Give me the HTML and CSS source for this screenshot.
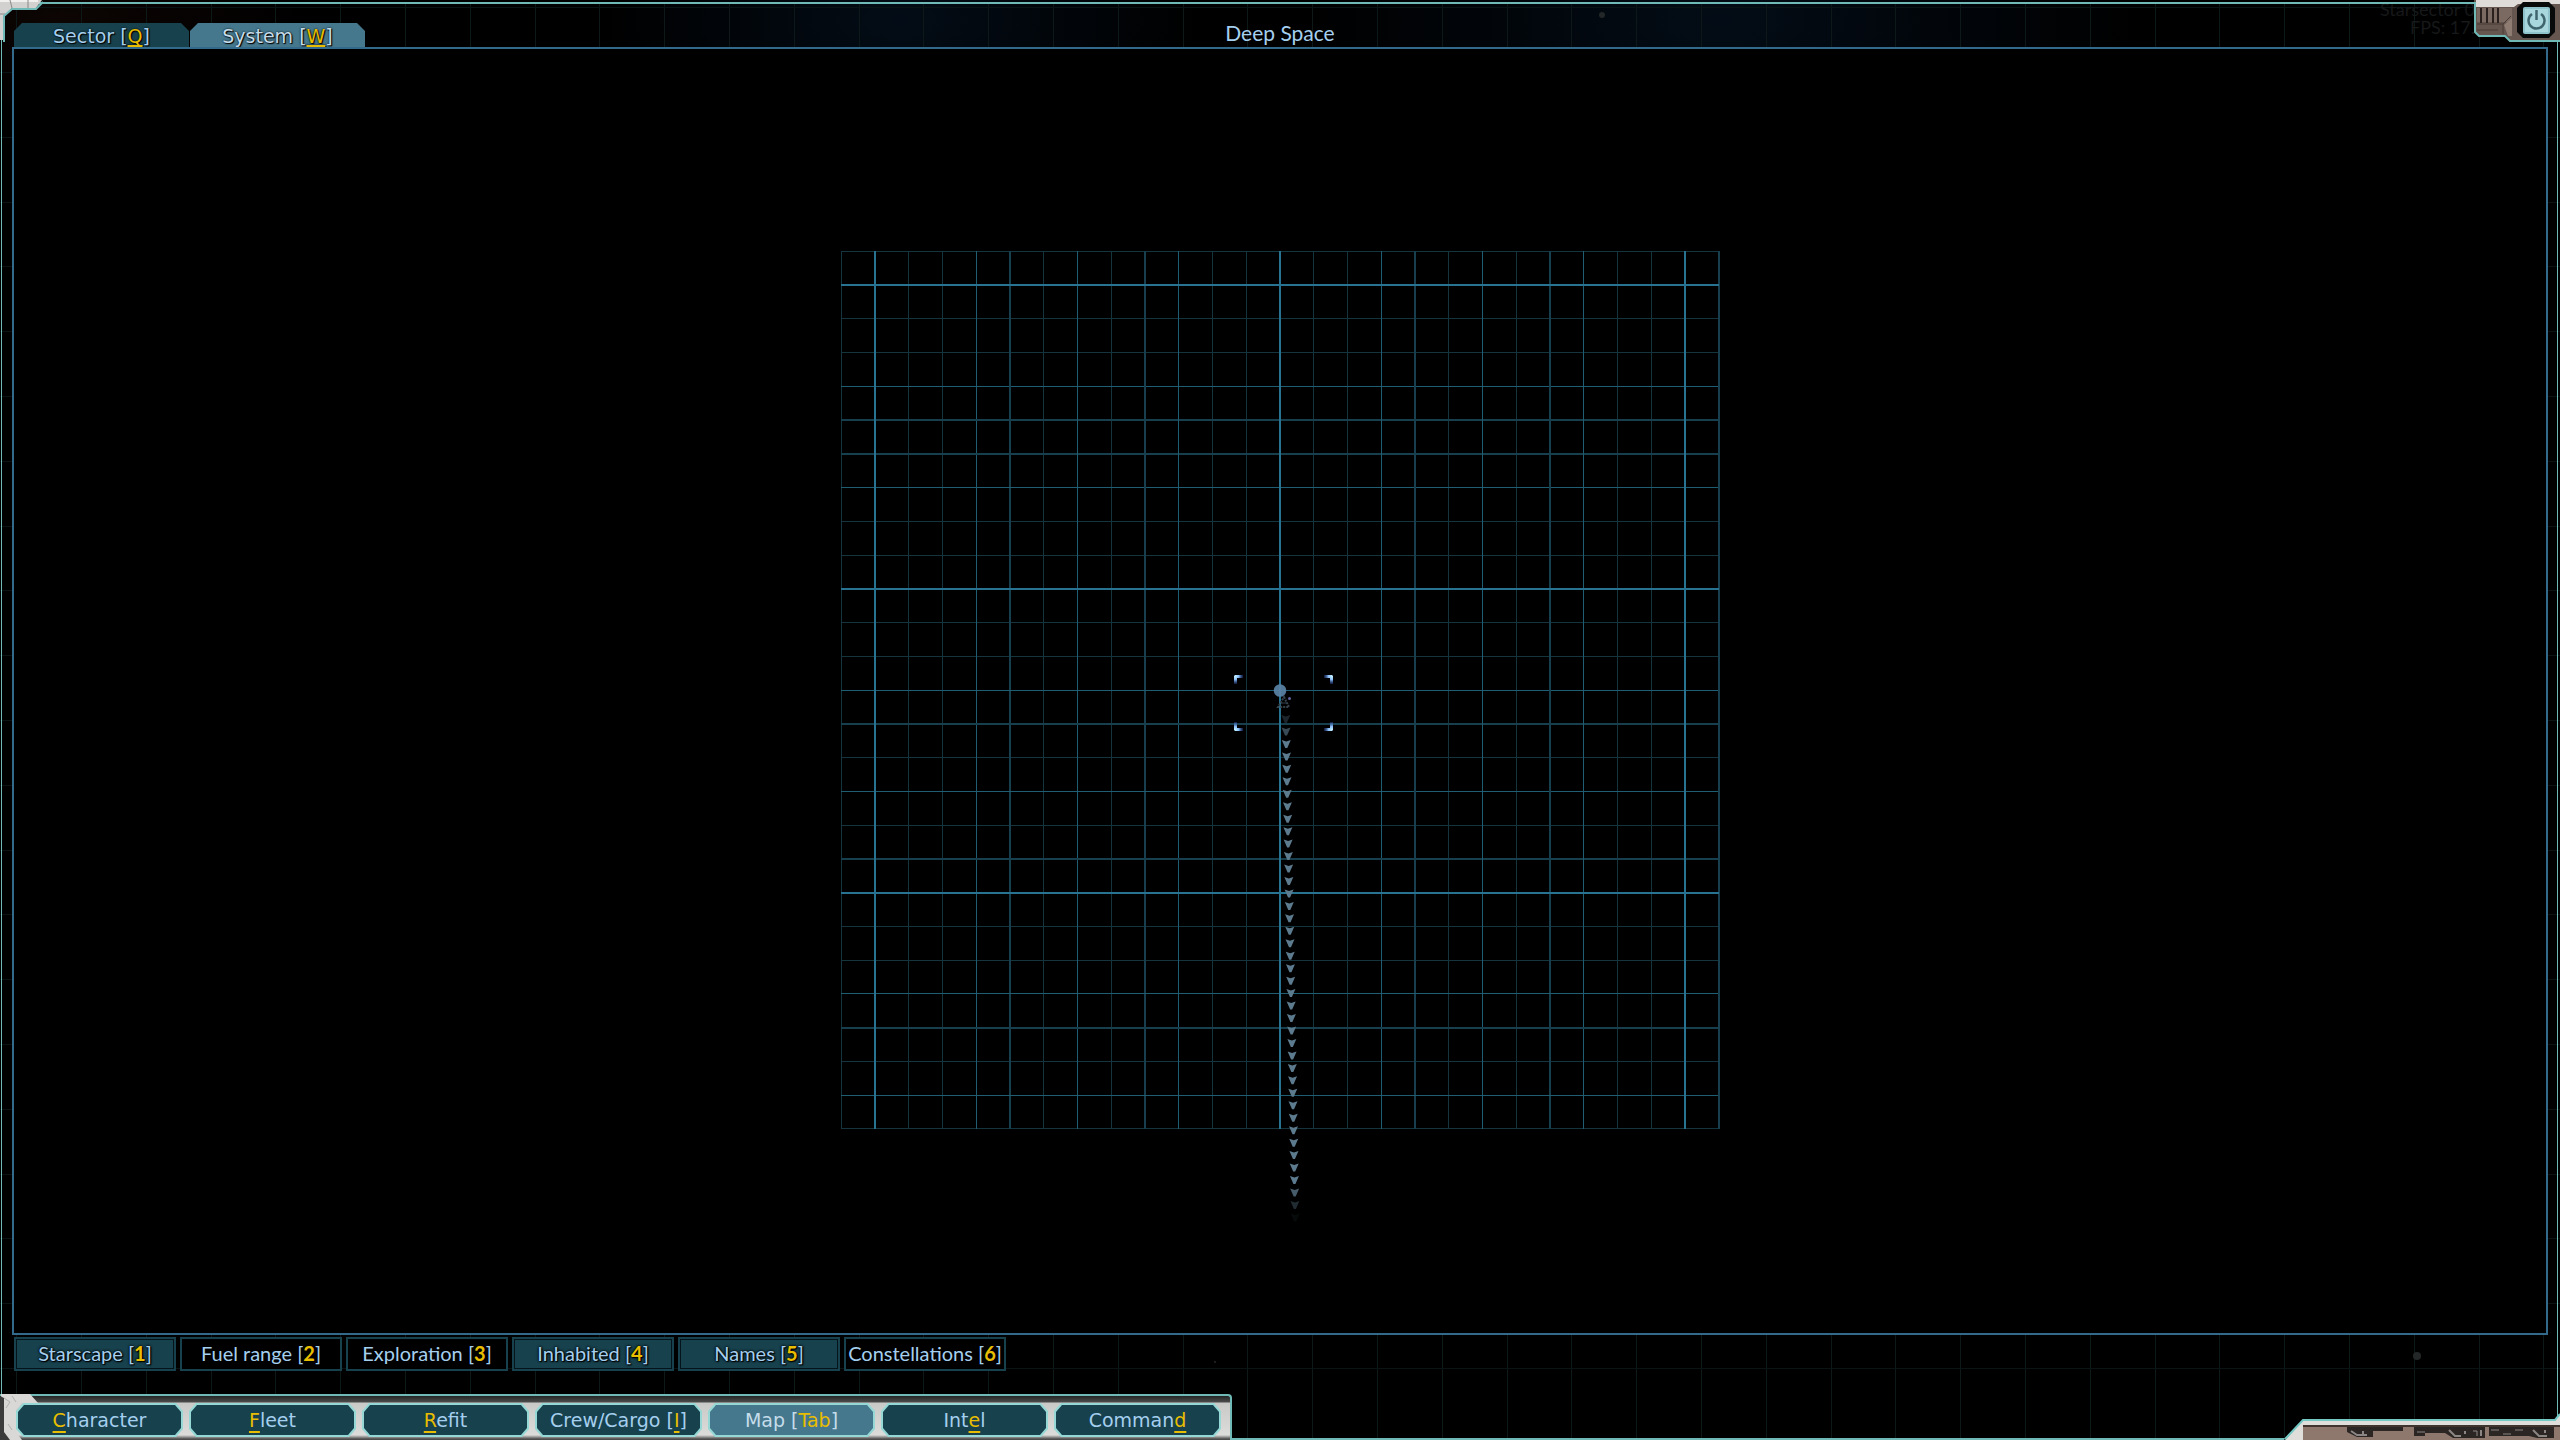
FILE: index.html
```html
<!DOCTYPE html>
<html lang="en">
<head>
<meta charset="utf-8">
<title>Deep Space</title>
<link rel="stylesheet" href="styles.css">
</head>
<body>
<svg class="backdrop" id="backdrop" aria-hidden="true"></svg>
<div class="debug" aria-hidden="true"><span>Starsector 0</span><span>FPS: 17.</span></div>

<div class="screen">
  <header class="top">
    <nav class="tabs">
      <button class="tab" type="button">Sector [<u>Q</u>]</button>
      <button class="tab tab-active" type="button">System [<u>W</u>]</button>
    </nav>
    <h1 class="title">Deep Space</h1>
  </header>

  <main class="map">
    <svg class="chart" id="chart" viewBox="0 0 880 880" role="img" aria-label="System map"></svg>
  </main>

  <div class="filters">
    <button class="filter filter-on" type="button">Starscape [<b>1</b>]</button>
    <button class="filter" type="button">Fuel range [<b>2</b>]</button>
    <button class="filter" type="button">Exploration [<b>3</b>]</button>
    <button class="filter filter-on" type="button">Inhabited [<b>4</b>]</button>
    <button class="filter filter-on" type="button">Names [<b>5</b>]</button>
    <button class="filter" type="button">Constellations [<b>6</b>]</button>
  </div>

  <nav class="dock">
    <svg class="dock-cap" width="38" height="46" viewBox="0 0 38 46" aria-hidden="true">
      <path d="M1 0H30L38 9H22L16 16V38L22 46H8L2 40Z" fill="#d9d8d7"/>
      <path d="M0 2V46H10L4 38V4Z" fill="#3b3b3b"/>
      <path d="M4 4L10 8L6 14M12 2L16 8M8 30L12 36" stroke="#b3b1af" fill="none"/>
    </svg>
    <button class="dock-button" type="button"><span><u>C</u>haracter</span></button>
    <button class="dock-button" type="button"><span><u>F</u>leet</span></button>
    <button class="dock-button" type="button"><span><u>R</u>efit</span></button>
    <button class="dock-button" type="button"><span>Crew/Cargo [<u>I</u>]</span></button>
    <button class="dock-button dock-active" type="button"><span>Map [<em>Tab</em>]</span></button>
    <button class="dock-button" type="button"><span>Int<u>e</u>l</span></button>
    <button class="dock-button" type="button"><span>Comman<u>d</u></span></button>
  </nav>
</div>

<div class="frame" aria-hidden="true"></div>

<svg class="corner corner-tl" width="46" height="42" viewBox="0 0 46 42" aria-hidden="true">
  <path d="M0 0H42L36 8H12L4 16V40H0Z" fill="#d3d1cf"/>
  <path d="M0 0H38V2H0Z" fill="#f1f0ee"/>
  <path d="M10 0L12 8M28 0V8M0 14L5 14" stroke="#8b8886" fill="none"/>
  <path d="M43 2L36 9H12L4 16V42" stroke="#6fb9b6" stroke-width="2" fill="none"/>
</svg>

<button class="power" type="button" aria-label="Menu">
  <svg width="86" height="44" viewBox="0 0 86 44" aria-hidden="true">
    <path d="M0 0H86V42H36L31 36H5L1 32Z" fill="#65564f"/>
    <path d="M2 0H86V4H44L40 7H2Z" fill="#dedbd8"/>
    <path d="M3 8H38V22H3Z" fill="#7a6a62"/>
    <path d="M7 8V23M13 8V23M19 8V23M24 8V23" stroke="#2a201d" stroke-width="2"/>
    <path d="M3 24H29L37 16M29 24V34M3 30H24" stroke="#4a3c36" stroke-width="1" fill="none"/>
    <path d="M30 25L38 18V36H34Z" fill="#8e7b72"/>
    <path d="M49 2H75L81 8V32L75 38H49L43 32V8Z" fill="#080909"/>
    <rect x="49" y="7" width="27" height="27" rx="2" fill="#8fc3cc"/>
    <rect x="51" y="9" width="23" height="23" fill="#a9d7de"/>
    <path d="M58 14A8 8 0 1 0 67 14M62.500 10V20" stroke="#3f656e" stroke-width="2.500" fill="none"/>
    <path d="M1 2V32L5 36H31L36 41H86" stroke="#6fb9b6" stroke-width="2" fill="none"/>
  </svg>
</button>

<svg class="corner corner-br" width="275" height="28" viewBox="0 0 275 28" aria-hidden="true">
  <path d="M0 28L18 8H270L275 2V28Z" fill="#e0dedb"/>
  <path d="M18 13H275V28H18Z" fill="#8e776d"/>
  <path d="M18 13H275V15H18Z" fill="#40342f"/>
  <g fill="#2b2624">
    <path d="M62 15H118V19H88V25H72L62 20Z"/>
    <path d="M129 15H200V26H168L160 21H140V24H129Z"/>
    <path d="M204 15H269V26H252L244 24H204Z"/>
  </g>
  <g stroke="#8b8683" stroke-width="2" fill="none">
    <path d="M66 19L72 23H82M78 19V22M164 18L170 24H176M180 19V22M196 18V24M248 18L254 24H262M260 18V21"/>
    <path d="M132 20H140M188 19H192V24M206 18H214M218 22H226M230 18H238" stroke-width="1"/>
  </g>
  <path d="M0 27L18 8H270L275 2" stroke="#74c9c5" stroke-width="2" fill="none"/>
</svg>
<script src="map.js"></script>
</body>
</html>
```
FILE: styles.css
```css
:root {
  --teal: #17414d;
  --teal-active: #45788d;
  --line: #33698a;
  --edge: #6fb9b6;
  --text: #a5cfee;
  --gold: #e9bd00;
  --display: "DejaVu Sans", Verdana, sans-serif;
  --label: Lato, "Open Sans", sans-serif;
}

* { box-sizing: border-box; }

body {
  margin: 0;
  background: #000;
  color: var(--text);
  font-family: var(--label);
}

button {
  margin: 0;
  padding: 0;
  border: 0;
  background: none;
  color: inherit;
  white-space: nowrap;
  cursor: pointer;
}

u {
  color: var(--gold);
  text-decoration: underline 2px;
  text-underline-offset: 4px;
  text-decoration-skip-ink: none;
}

em { color: var(--gold); font-style: normal; }

.backdrop {
  position: absolute;
  inset: 0;
  width: 100%;
  height: 100%;
}

.debug {
  position: absolute;
  top: 0;
  right: 85px;
  display: flex;
  flex-direction: column;
  align-items: flex-end;
  color: #161819;
  font-size: 18px;
  line-height: 18px;
}

.screen {
  position: relative;
  display: flex;
  flex-direction: column;
  min-height: 100vh;
}

.top {
  display: grid;
  grid-template-columns: 1fr auto 1fr;
  align-items: end;
  height: 47px;
  padding: 0 14px;
}

.tabs { display: flex; gap: 1px; }

.tab {
  width: 175px;
  height: 24px;
  background: var(--teal);
  clip-path: polygon(8px 0, calc(100% - 8px) 0, 100% 8px, 100% 100%, 0 100%, 0 8px);
  font: 19px/26px var(--display);
  text-shadow: 0 0 2px #000, 1px 1px 1px #000;
}

.tab u { text-underline-offset: 2px; }

.tab-active { background: var(--teal-active); color: #c5dcea; }

.title {
  margin: 0;
  padding-bottom: 1px;
  font-size: 21px;
  line-height: 26px;
  font-weight: 400;
}

.map {
  display: flex;
  flex: 1;
  align-items: center;
  justify-content: center;
  margin: 0 12px;
  border: 2px solid var(--line);
  background: #000;
}

.chart {
  width: 880px;
  height: 880px;
  overflow: visible;
}

.filters {
  display: flex;
  gap: 4px;
  padding: 2px 14px 23px;
}

.filter {
  width: 162px;
  height: 34px;
  border: 2px solid var(--teal);
  background: #000;
  font: 20px/26px var(--label);
  padding-bottom: 2px;
  text-shadow: 0 0 2px #000, 0 0 2px #000;
}

.filter b { color: var(--gold); }

.filter-on {
  background: var(--teal);
  box-shadow: inset 0 0 0 1px #04141a;
  text-shadow: 0 0 2px #000, 0 0 3px #000, 1px 1px 1px #000;
}

.dock {
  position: relative;
  display: flex;
  align-self: flex-start;
  gap: 6px;
  padding: 7px 9px 3px 16px;
  border-top: 2px solid var(--edge);
  border-right: 2px solid var(--edge);
  border-top-right-radius: 4px;
  background: linear-gradient(#232424 0, #4b4b4b 6px, #c9c9c8 7px, #dcdcdb 39px, #4c4c4c 43px);
}

.dock-cap {
  position: absolute;
  top: -2px;
  left: 0;
}

.dock-button {
  position: relative;
  width: 167px;
  height: 34px;
  background: #96d8d5;
  clip-path: polygon(7px 0, calc(100% - 7px) 0, 100% 8px, 100% calc(100% - 8px), calc(100% - 7px) 100%, 7px 100%, 0 calc(100% - 8px), 0 8px);
  font: 19px/34px var(--display);
}

.dock-button::before {
  content: "";
  position: absolute;
  inset: 2px;
  background: var(--teal);
  clip-path: polygon(6px 0, calc(100% - 6px) 0, 100% 7px, 100% calc(100% - 7px), calc(100% - 6px) 100%, 6px 100%, 0 calc(100% - 7px), 0 7px);
}

.dock-button span { position: relative; }

.dock-active { color: #c5dcea; }
.dock-active::before { background: var(--teal-active); }

.frame {
  position: absolute;
  inset: 2px 2px 0 1px;
  border: solid var(--edge);
  border-width: 2px 1px;
  pointer-events: none;
  clip-path: polygon(0 0, 100% 0, 100% calc(100% - 24px), calc(100% - 260px) calc(100% - 24px), calc(100% - 274px) 100%, 1229px 100%, 1229px calc(100% - 46px), 0 calc(100% - 46px));
}

.corner { position: absolute; pointer-events: none; }
.corner-tl { top: 0; left: 0; }
.corner-br { right: 0; bottom: 0; }

.power {
  position: absolute;
  top: 0;
  right: 0;
  width: 86px;
  height: 44px;
}

.power svg { display: block; }
```
FILE: map.js
```js
const NS = "http://www.w3.org/2000/svg";

function add(parent, name, attrs) {
  const node = document.createElementNS(NS, name);
  for (const key in attrs) node.setAttribute(key, attrs[key]);
  parent.appendChild(node);
  return node;
}

// Faint backdrop grid and stars behind the panels
const backdrop = document.getElementById("backdrop");
const width = window.innerWidth;
const height = window.innerHeight;
const defs = add(backdrop, "defs", {});
const glow = add(defs, "radialGradient", { id: "glow" });
add(glow, "stop", { offset: 0, "stop-color": "#030c16" });
add(glow, "stop", { offset: 1, "stop-color": "#030c16", "stop-opacity": 0 });
const rust = add(defs, "radialGradient", { id: "rust" });
add(rust, "stop", { offset: 0, "stop-color": "#0c0503" });
add(rust, "stop", { offset: 1, "stop-color": "#0c0503", "stop-opacity": 0 });
add(backdrop, "ellipse", { cx: 1720, cy: 20, rx: 420, ry: 200, fill: "url(#glow)" });
add(backdrop, "ellipse", { cx: 900, cy: 20, rx: 300, ry: 160, fill: "url(#glow)" });
add(backdrop, "ellipse", { cx: 60, cy: 20, rx: 260, ry: 100, fill: "url(#rust)" });
for (let x = 81 - 64.8; x < width; x += 64.8) {
  add(backdrop, "rect", { x: Math.round(x), y: 4, width: 1, height: height, fill: "#0d1819" });
}
for (let y = height - 72; y > 0; y -= 64.8) {
  add(backdrop, "rect", { x: 0, y: Math.round(y), width: width, height: 1, fill: "#0b1415" });
}
for (const [x, y, r] of [[1602, 15, 3], [2417, height - 84, 4], [1215, height - 78, 1], [2373, height - 5, 1]]) {
  add(backdrop, "circle", { cx: x, cy: y, r: r, fill: "#242727" });
}

// Sector grid: 26 by 26 cells
const chart = document.getElementById("chart");
const CELL = 33.75;
const majorX = [1, 13, 25], majorY = [1, 10, 19];
const wideX = [5, 9, 17, 21, 26], wideY = [5, 6, 14, 18, 23];

function style(i, major, wide) {
  if (major.includes(i)) return ["#287391", 2, 2];
  if (wide.includes(i)) return ["#183f4e", 2, 1];
  if (i % 3 === 1) return ["#1f5d72", 1, 1];
  return ["#14343e", 1, 0];
}

const lines = [];
for (let i = 0; i <= 26; i++) {
  const [cx, wx, rx] = style(i, majorX, wideX);
  const px = 1.25 + CELL * i;
  lines.push([rx, { x: wx === 2 ? Math.round(px) - 1 : Math.floor(px), y: 0, width: wx, height: 878, fill: cx }]);
  const [cy, wy, ry] = style(i, majorY, wideY);
  const py = 0.25 + CELL * i;
  lines.push([ry, { x: 1, y: wy === 2 ? Math.round(py) - 1 : Math.floor(py), width: 878, height: wy, fill: cy }]);
}
lines.sort((a, b) => a[0] - b[0]);
for (const [, attrs] of lines) add(chart, "rect", attrs);

// Course trail
for (let i = 0; i <= 40; i++) {
  const x = 445.8 + i * 0.233;
  const y = 468 + i * 12.46;
  const fade = { 0: 0.3, 1: 0.6, 38: 0.75, 39: 0.35, 40: 0.08 }[i] || 1;
  add(chart, "path", {
    d: `M${x - 4.5} ${y - 4}L${x} ${y - 2.5}L${x + 4.5} ${y - 4}L${x + 1} ${y + 4}H${x - 1}Z`,
    fill: "#5d7b8e", opacity: fade
  });
}

// Fleet marker and location dot
add(chart, "path", { d: "M444 446L449 456H438Z", fill: "none", stroke: "#35424c", "stroke-width": 2, "stroke-dasharray": "2 1" });
add(chart, "path", { d: "M441 452H447", stroke: "#35424c" });
add(chart, "circle", { cx: 449.5, cy: 447.5, r: 1.5, fill: "#62629c" });
add(chart, "circle", { cx: 440, cy: 439.5, r: 6.3, fill: "#5a82a5", opacity: 0.92 });

// Selection brackets
const fadeGradient = add(add(chart, "defs", {}), "radialGradient", {
  id: "bracket", gradientUnits: "userSpaceOnUse", cx: 1, cy: 1, r: 9
});
add(fadeGradient, "stop", { offset: 0, "stop-color": "#c8f4ff" });
add(fadeGradient, "stop", { offset: 0.4, "stop-color": "#8cc0fa" });
add(fadeGradient, "stop", { offset: 1, "stop-color": "#1c3aa0", "stop-opacity": 0.2 });
for (const [x, y, sx, sy] of [[394, 424, 1, 1], [493, 424, -1, 1], [394, 480, 1, -1], [493, 480, -1, -1]]) {
  add(chart, "path", {
    d: "M0 1L1 0H9V3H3V9H0Z", fill: "url(#bracket)",
    transform: `translate(${x} ${y}) scale(${sx} ${sy})`
  });
}
```
